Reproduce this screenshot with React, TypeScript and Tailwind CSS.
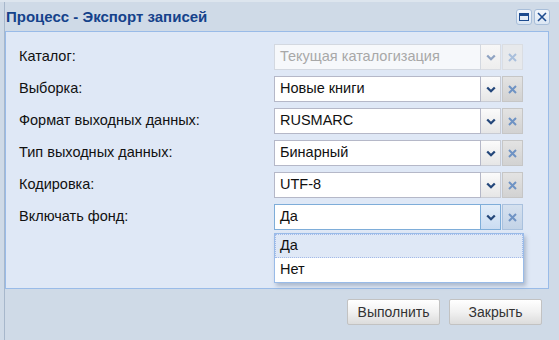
import React from "react";

const Chevron = ({ color = "#24477a" }: { color?: string }) => (
  <svg width="10" height="7" viewBox="0 0 10 7">
    <polyline points="1.2,1.5 5,5.2 8.8,1.5" fill="none" stroke={color} strokeWidth="2.3" />
  </svg>
);

const Cross = ({ color = "#6f93c4" }: { color?: string }) => (
  <svg width="9" height="9" viewBox="0 0 9 9">
    <path d="M1 1 L8 8 M8 1 L1 8" stroke={color} strokeWidth="2" fill="none" />
  </svg>
);

type RowProps = {
  label: string;
  value: string;
  disabled?: boolean;
  focused?: boolean;
};

const Row = ({ label, value, disabled, focused }: RowProps) => (
  <div className="flex items-center h-[26px]">
    <div className="w-[255px] text-[14.5px] text-[#111]">{label}</div>
    <div className="flex h-[26px]">
      <div
        className={
          "w-[207px] h-[26px] flex items-center pl-[5px] text-[14.5px] border " +
          (disabled
            ? "bg-[#f6f8fb] border-[#d3d8e0] text-[#a8a8a8]"
            : focused
            ? "bg-white border-[#7eadd9] text-[#111]"
            : "bg-white border-[#b5b8c8] text-[#111]")
        }
      >
        {value}
      </div>
      <div
        className={
          "w-[20px] h-[26px] flex items-center justify-center border-y border-r " +
          (disabled
            ? "bg-gradient-to-b from-[#f7f7f7] to-[#eeeeee] border-[#d9dce2]"
            : focused
            ? "bg-gradient-to-b from-[#e2edf9] to-[#cadcf2] border-[#7eadd9]"
            : "bg-gradient-to-b from-[#fbfbfb] to-[#e6e6e6] border-[#c8cbd3]")
        }
      >
        <Chevron color={disabled ? "#8fa3c2" : "#24477a"} />
      </div>
      <div
        className={
          "ml-[1px] w-[21px] h-[26px] flex items-center justify-center border " +
          (disabled
            ? "bg-[#e7e9ec] border-[#dadde2]"
            : focused
            ? "bg-gradient-to-b from-[#d5e1ef] to-[#c3d3e7] border-[#a9c1de]"
            : "bg-gradient-to-b from-[#e3e3e3] to-[#d2d2d2] border-[#c6c6c6]")
        }
      >
        <Cross color={disabled ? "#a9bfdc" : "#6f93c4"} />
      </div>
    </div>
  </div>
);

export default function App() {
  return (
    <div
      className="w-[559px] h-[340px] bg-[#cfdae7] border-t-2 border-[#dde5ee] relative overflow-hidden"
      style={{ fontFamily: '"Liberation Sans", Arial, sans-serif' }}
    >
      <div className="ml-[4px] h-[338px] border-l border-[#a7b7cb] flex flex-col">
        {/* header */}
        <div className="h-[29px] flex items-center justify-between">
          <div className="text-[15px] font-bold text-[#15428b] pl-[1px] pt-[2px]">
            Процесс - Экспорт записей
          </div>
          <div className="flex gap-[2px] mr-[9px] mt-[1px]">
            <div className="w-[16px] h-[16px] rounded-[3px] bg-gradient-to-b from-[#f3f7fc] to-[#dbe6f3] border border-[#a8bed9] flex items-center justify-center">
              <div className="w-[10px] h-[8px] border-[1.5px] border-t-[3px] border-[#1d4b8f]" />
            </div>
            <div className="w-[16px] h-[16px] rounded-[3px] bg-gradient-to-b from-[#f3f7fc] to-[#dbe6f3] border border-[#a8bed9] flex items-center justify-center">
              <svg width="10" height="10" viewBox="0 0 10 10">
                <path d="M1 1 L9 9 M9 1 L1 9" stroke="#1d4b8f" strokeWidth="1.6" fill="none" />
              </svg>
            </div>
          </div>
        </div>
        {/* body */}
        <div className="relative w-[544px] h-[258px] bg-[#dfe8f6] border border-[#99bbe8] pl-[13px] pt-[12px] flex flex-col gap-[6px]">
          <Row label="Каталог:" value="Текущая каталогизация" disabled />
          <Row label="Выборка:" value="Новые книги" />
          <Row label="Формат выходных данных:" value="RUSMARC" />
          <Row label="Тип выходных данных:" value="Бинарный" />
          <Row label="Кодировка:" value="UTF-8" />
          <Row label="Включать фонд:" value="Да" focused />
          {/* dropdown list */}
          <div className="absolute left-[268px] top-[201px] w-[250px] h-[50px] bg-white border border-[#99bbe8] shadow-[2px_3px_4px_rgba(80,100,130,0.35)] flex flex-col">
            <div className="h-[24px] flex items-center pl-[4px] text-[14.5px] text-[#111] bg-[#dfe8f6] border border-dotted border-[#a3bae9]">
              Да
            </div>
            <div className="h-[24px] flex items-center pl-[5px] text-[14.5px] text-[#111]">
              Нет
            </div>
          </div>
        </div>
        {/* footer */}
        <div className="flex justify-end gap-[9px] pr-[17px] pt-[10px]">
          <button className="w-[93px] h-[26px] rounded-[2px] border border-[#c2c2c2] bg-gradient-to-b from-[#ffffff] via-[#f1f1f1] to-[#dcdcdc] text-[14px] text-[#333]">
            Выполнить
          </button>
          <button className="w-[93px] h-[26px] rounded-[2px] border border-[#c2c2c2] bg-gradient-to-b from-[#ffffff] via-[#f1f1f1] to-[#dcdcdc] text-[14px] text-[#333]">
            Закрыть
          </button>
        </div>
      </div>
    </div>
  );
}
